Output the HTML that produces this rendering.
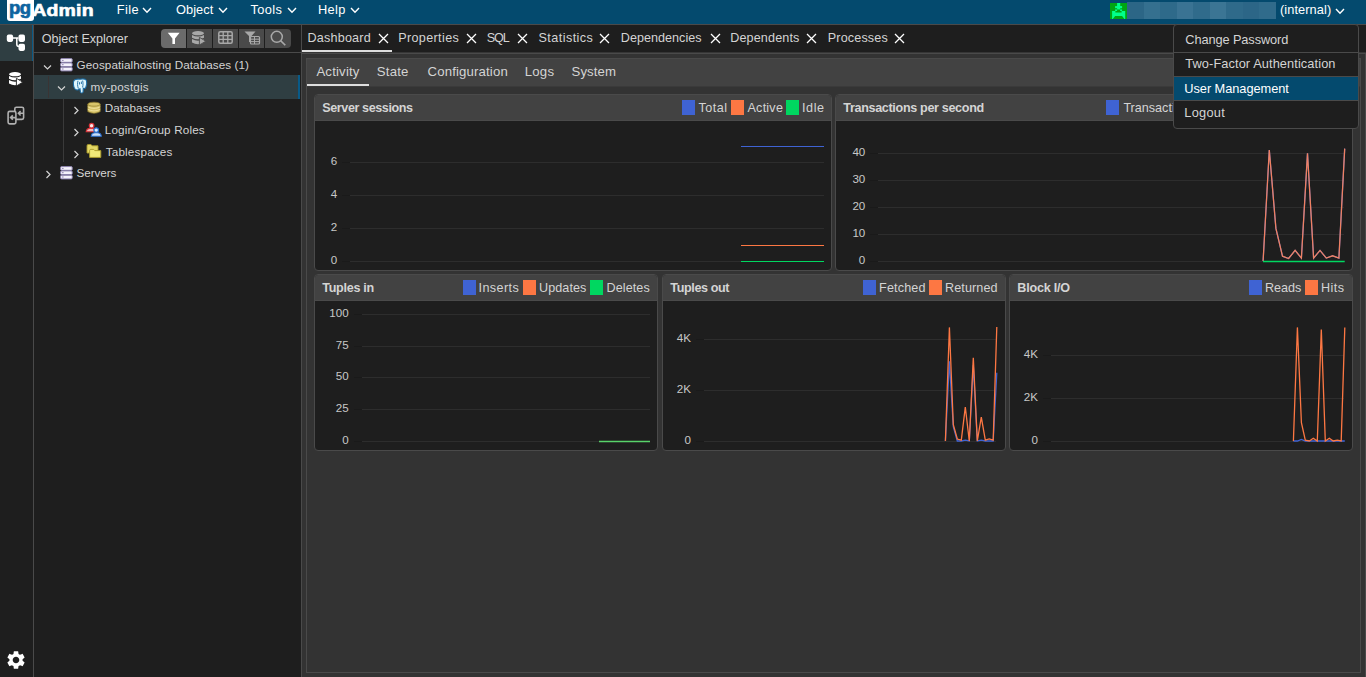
<!DOCTYPE html>
<html><head><meta charset="utf-8">
<style>
*{box-sizing:border-box;margin:0;padding:0}
html,body{width:1366px;height:677px;overflow:hidden;background:#1e1e1e;font-family:"Liberation Sans", sans-serif;position:relative}
.t{position:absolute;white-space:nowrap}
.r{position:absolute}
.s{position:absolute;overflow:visible}
</style></head><body>
<div class="r" style="left:0px;top:0px;width:1366px;height:24px;background:#044a6e;"></div>
<div class="r" style="left:0px;top:24px;width:1366px;height:1px;background:#4a4a4a;"></div>
<div class="r" style="left:7px;top:-3px;width:27px;height:24px;background:#ffffff;border-radius:3px"></div>
<div class="t" style="left:9.10px;top:-1px;font-size:18.5px;line-height:18.5px;color:#0d64a0;font-weight:bold;letter-spacing:-0.6px;-webkit-text-stroke:0.7px #0d64a0;">pg</div>
<div class="t" style="left:32.20px;top:0px;font-size:19.5px;line-height:19.5px;color:#ffffff;font-weight:bold;letter-spacing:0.2px;-webkit-text-stroke:0.7px #fff;transform:scaleY(0.88);transform-origin:0 16px;">Admin</div>
<div class="t" style="left:116.70px;top:4px;font-size:12.8px;line-height:12.8px;color:#ffffff;font-weight:normal;letter-spacing:0.433px;">File</div>
<svg class="s" style="left:142px;top:7.300000000000001px;" width="10" height="6.3" viewBox="0 0 10 6.3"><polyline points="1,1 5.0,5.3 9,1" fill="none" stroke="#fff" stroke-width="1.4"/></svg>
<div class="t" style="left:176.00px;top:4px;font-size:12.8px;line-height:12.8px;color:#ffffff;font-weight:normal;letter-spacing:0.06px;">Object</div>
<svg class="s" style="left:218px;top:7.300000000000001px;" width="10" height="6.3" viewBox="0 0 10 6.3"><polyline points="1,1 5.0,5.3 9,1" fill="none" stroke="#fff" stroke-width="1.4"/></svg>
<div class="t" style="left:250.50px;top:4px;font-size:12.8px;line-height:12.8px;color:#ffffff;font-weight:normal;letter-spacing:0.4px;">Tools</div>
<svg class="s" style="left:286.5px;top:7.300000000000001px;" width="10" height="6.3" viewBox="0 0 10 6.3"><polyline points="1,1 5.0,5.3 9,1" fill="none" stroke="#fff" stroke-width="1.4"/></svg>
<div class="t" style="left:318.00px;top:4px;font-size:12.8px;line-height:12.8px;color:#ffffff;font-weight:normal;letter-spacing:0.333px;">Help</div>
<svg class="s" style="left:350px;top:7.300000000000001px;" width="10" height="6.3" viewBox="0 0 10 6.3"><polyline points="1,1 5.0,5.3 9,1" fill="none" stroke="#fff" stroke-width="1.4"/></svg>
<div class="r" style="left:1110px;top:3px;width:17px;height:16px;background:#00a512;"></div>
<svg class="s" style="left:1110px;top:3px;" width="17" height="16" viewBox="0 0 17 16"><g fill="#00ff8a"><rect x="7.1" y="0" width="3.1" height="6.5"/><rect x="5.1" y="3.1" width="7" height="2.1"/><rect x="5.1" y="6.4" width="2" height="1.7"/><rect x="10.1" y="6.4" width="2" height="1.7"/><path d="M2.1 8.05 H15.2 V16 H14.4 L12.1 12.9 H5.1 L2.8 16 H2.1Z"/></g><rect x="5.4" y="8" width="6.2" height="1.5" fill="#00a512"/></svg>
<div class="r" style="left:1127px;top:2px;width:17px;height:17px;background:#2c6686;"></div>
<div class="r" style="left:1144px;top:2px;width:16px;height:17px;background:#35708f;"></div>
<div class="r" style="left:1160px;top:2px;width:17px;height:17px;background:#2e6a8a;"></div>
<div class="r" style="left:1177px;top:2px;width:16px;height:17px;background:#3a7393;"></div>
<div class="r" style="left:1193px;top:2px;width:17px;height:17px;background:#306b8b;"></div>
<div class="r" style="left:1210px;top:2px;width:16px;height:17px;background:#3b7594;"></div>
<div class="r" style="left:1226px;top:2px;width:17px;height:17px;background:#2f6a8a;"></div>
<div class="r" style="left:1243px;top:2px;width:16px;height:17px;background:#2c6687;"></div>
<div class="r" style="left:1259px;top:2px;width:17px;height:17px;background:#306b8b;"></div>
<div class="t" style="left:1280.00px;top:4px;font-size:12.8px;line-height:12.8px;color:#ffffff;font-weight:normal;letter-spacing:0.078px;">(internal)</div>
<svg class="s" style="left:1335px;top:7.6px;" width="10" height="6.3" viewBox="0 0 10 6.3"><polyline points="1,1 5.0,5.3 9,1" fill="none" stroke="#fff" stroke-width="1.4"/></svg>
<div class="r" style="left:0px;top:25px;width:33px;height:652px;background:#1e1e1e;"></div>
<div class="r" style="left:0px;top:25px;width:32px;height:36px;background:#2f3e42;"></div>
<div class="r" style="left:32px;top:25px;width:1px;height:36px;background:#0a5a86;"></div>
<div class="r" style="left:33px;top:25px;width:1px;height:652px;background:#4a4a4a;"></div>
<svg class="s" style="left:6px;top:33px;" width="20" height="19" viewBox="0 0 20 19"><g fill="#fff"><rect x="0.8" y="1.6" width="6.3" height="7.3" rx="1.8"/><rect x="12.5" y="1.6" width="6.5" height="7.3" rx="1.8"/><rect x="12.5" y="10.8" width="6.5" height="7.1" rx="1.8"/></g><path d="M7 5.1 H12.5 M10.8 5.1 V11.3 Q10.8 13.6 13 13.6" fill="none" stroke="#fff" stroke-width="1.5"/></svg>
<svg class="s" style="left:8px;top:71px;" width="16" height="16" viewBox="0 0 16 16"><g fill="#fff"><ellipse cx="7" cy="3.2" rx="6" ry="2.1"/><path d="M1 4.9 Q7 8.3 13 4.9 V7.7 Q7 11 1 7.7Z"/><path d="M1 9.1 Q7 12.4 13 9.1 V12.6 Q7 15.9 1 12.6Z"/></g><path d="M8.4 7.3 L14.8 11.2 L8.4 15Z" fill="#fff" stroke="#1e1e1e" stroke-width="0.9"/></svg>
<svg class="s" style="left:6px;top:105px;" width="20" height="22" viewBox="0 0 20 22"><g fill="none" stroke="#b0b0b0" stroke-width="1.6"><rect x="8.8" y="2.2" width="8.8" height="12.2" rx="1.6"/><path d="M17.6 8.3 H12.4 M14.6 6.1 L12.4 8.3 L14.6 10.5"/><rect x="2.1" y="6.4" width="7.8" height="12.5" rx="1.6" fill="#1e1e1e"/><path d="M9.9 12.6 H4.6 M6.8 10.4 L4.6 12.6 L6.8 14.8"/></g></svg>
<svg class="s" style="left:4.65px;top:648.75px;" width="22" height="22" viewBox="0 0 22 22"><g transform="scale(0.9167)"><path fill="#fff" fill-rule="evenodd" d="M19.14,12.94c0.04-0.3,0.06-0.61,0.06-0.94c0-0.32-0.02-0.64-0.07-0.94l2.03-1.58c0.18-0.14,0.23-0.41,0.12-0.61l-1.92-3.32c-0.12-0.22-0.37-0.29-0.59-0.22l-2.39,0.96c-0.5-0.38-1.03-0.7-1.62-0.94L14.4,2.81c-0.04-0.24-0.24-0.41-0.48-0.41h-3.84c-0.24,0-0.43,0.17-0.47,0.41L9.25,5.35C8.66,5.59,8.12,5.92,7.63,6.29L5.24,5.33c-0.22-0.08-0.47,0-0.59,0.22L2.74,8.87C2.62,9.08,2.66,9.34,2.86,9.48l2.03,1.58C4.84,11.36,4.8,11.69,4.8,12s0.02,0.64,0.07,0.94l-2.03,1.58c-0.18,0.14-0.23,0.41-0.12,0.61l1.92,3.32c0.12,0.22,0.37,0.29,0.59,0.22l2.39-0.96c0.5,0.38,1.03,0.7,1.62,0.94l0.36,2.54c0.05,0.24,0.24,0.41,0.48,0.41h3.84c0.24,0,0.44-0.17,0.47-0.41l0.36-2.54c0.59-0.24,1.13-0.56,1.62-0.94l2.39,0.96c0.22,0.08,0.47,0,0.59-0.22l1.92-3.32c0.12-0.22,0.07-0.47-0.12-0.61L19.14,12.94z M12,15.6c-1.98,0-3.6-1.62-3.6-3.6s1.62-3.6,3.6-3.6s3.6,1.62,3.6,3.6S13.98,15.6,12,15.6z"/></g></svg>
<div class="r" style="left:34px;top:25px;width:267px;height:652px;background:#1e1e1e;"></div>
<div class="r" style="left:34px;top:52px;width:267px;height:1px;background:#4a4a4a;"></div>
<div class="r" style="left:301px;top:25px;width:1px;height:652px;background:#4a4a4a;"></div>
<div class="t" style="left:41.80px;top:33px;font-size:12.6px;line-height:12.6px;color:#d4d4d4;font-weight:normal;letter-spacing:-0.043px;">Object Explorer</div>
<div class="r" style="left:161px;top:29px;width:25px;height:19px;background:#6b6b6b;border-radius:4px 0 0 4px"></div>
<div class="r" style="left:187px;top:29px;width:25px;height:19px;background:#4a4a4a;"></div>
<div class="r" style="left:213px;top:29px;width:25px;height:19px;background:#4a4a4a;"></div>
<div class="r" style="left:239px;top:29px;width:25px;height:19px;background:#4a4a4a;"></div>
<div class="r" style="left:265px;top:29px;width:26px;height:19px;background:#4a4a4a;border-radius:0 4px 4px 0"></div>
<svg class="s" style="left:167px;top:32px;" width="14" height="13" viewBox="0 0 14 13"><path d="M0.8 0.8 H12.6 L8 6.5 V12 H5.4 V6.5Z" fill="#fff"/></svg>
<svg class="s" style="left:191px;top:30px;" width="16" height="16" viewBox="0 0 16 16"><g fill="#a8a8a8"><ellipse cx="7" cy="3.2" rx="6" ry="2.1"/><path d="M1 4.9 Q7 8.3 13 4.9 V7.7 Q7 11 1 7.7Z"/><path d="M1 9.1 Q7 12.4 13 9.1 V12.6 Q7 15.9 1 12.6Z"/></g><path d="M8.4 7.3 L14.8 11.2 L8.4 15Z" fill="#a8a8a8" stroke="#4a4a4a" stroke-width="0.9"/></svg>
<svg class="s" style="left:218px;top:31px;" width="15" height="13" viewBox="0 0 15 13"><rect x="0.8" y="0.8" width="13.4" height="11.4" rx="1.5" fill="none" stroke="#a8a8a8" stroke-width="1.5"/><path d="M0.8 4.6 H14.2 M0.8 8.4 H14.2 M5.2 0.8 V12.2 M9.8 0.8 V12.2" stroke="#a8a8a8" stroke-width="1.3"/></svg>
<svg class="s" style="left:244px;top:31px;" width="16" height="14" viewBox="0 0 16 14"><path d="M0.5 0.5 H11.5 L7.5 5 V11 H5 V5Z" fill="#a8a8a8"/><rect x="6.5" y="5.5" width="9" height="7.5" rx="1" fill="#4a4a4a" stroke="#a8a8a8" stroke-width="1.2"/><path d="M6.5 8.2 H15.5 M6.5 10.6 H15.5 M10.5 5.5 V13" stroke="#a8a8a8" stroke-width="1"/></svg>
<svg class="s" style="left:270px;top:30px;" width="17" height="17" viewBox="0 0 17 17"><circle cx="6.8" cy="6.8" r="5.5" fill="none" stroke="#a8a8a8" stroke-width="1.5"/><path d="M10.6 10.6 L15.3 15.3" stroke="#a8a8a8" stroke-width="1.6"/></svg>
<div class="r" style="left:34px;top:75px;width:264px;height:24px;background:#2f3e42;"></div>
<div class="r" style="left:298px;top:75px;width:2px;height:24px;background:#085a88;"></div>
<div class="r" style="left:48px;top:76px;width:1px;height:22px;background:#3a3434;"></div>
<div class="r" style="left:63px;top:99px;width:1px;height:63px;background:#3a3a3a;"></div>
<svg class="s" style="left:42.5px;top:63.5px;" width="10" height="7" viewBox="0 0 10 7"><polyline points="1,1.5 4.5,5 8,1.5" fill="none" stroke="#d4d4d4" stroke-width="1.2"/></svg>
<svg class="s" style="left:59.5px;top:58px;" width="13" height="14" viewBox="0 0 13 14"><g fill="#f4f2fb" stroke="#8a80ad" stroke-width="1"><rect x="0.6" y="0.6" width="11.6" height="3.7" rx="1"/><rect x="0.6" y="4.9" width="11.6" height="3.7" rx="1"/><rect x="0.6" y="9.2" width="11.6" height="3.7" rx="1"/></g><g stroke="#8477a8" stroke-width="0.9"><path d="M2 2.4 H3.6 M2 6.7 H3.6 M2 11 H3.6"/></g></svg>
<div class="t" style="left:76.60px;top:59px;font-size:11.7px;line-height:11.7px;color:#d4d4d4;font-weight:normal;letter-spacing:0.073px;">Geospatialhosting Databases (1)</div>
<svg class="s" style="left:57px;top:85px;" width="10" height="7" viewBox="0 0 10 7"><polyline points="1,1.5 4.5,5 8,1.5" fill="none" stroke="#d4d4d4" stroke-width="1.2"/></svg>
<svg class="s" style="left:72px;top:78px;" width="16" height="16" viewBox="0 0 16 16"><path d="M2 2.5 C3 1 6 1 8 1.2 C10 0.8 13.5 0.8 14.5 2.5 C15 4.5 14.6 8 13.6 10 L12.2 10.5 L11.3 10.2 L11.1 14 C10.9 15.3 8.6 15.3 8.4 14 L8 10.8 C7.2 11.2 6.6 11.6 5.6 12 C3 12 1.8 10 1.5 7 C1.2 5 1.3 3.5 2 2.5Z" fill="#def6fd" stroke="#1a6aa3" stroke-width="1.1"/><path d="M6 2.8 C5.3 5 5.4 8 6.4 10.6 M10.6 2.6 C11.2 4.6 11.1 7 10.6 9.4 M7.5 4.2 V6.5 M9.4 3.6 V6" fill="none" stroke="#1a6aa3" stroke-width="0.9"/></svg>
<div class="t" style="left:90.50px;top:81px;font-size:11.7px;line-height:11.7px;color:#d4d4d4;font-weight:normal;letter-spacing:0.178px;">my-postgis</div>
<svg class="s" style="left:73px;top:105.5px;" width="7" height="9" viewBox="0 0 7 9"><polyline points="1.5,1 5,4.5 1.5,8" fill="none" stroke="#d4d4d4" stroke-width="1.2"/></svg>
<svg class="s" style="left:87px;top:101px;" width="14" height="14" viewBox="0 0 14 14"><g fill="#d9c56a" stroke="#8f7d2c" stroke-width="0.7"><path d="M0.8 3.2 V10.6 Q7 14 13.2 10.6 V3.2Z"/><ellipse cx="7" cy="3.2" rx="6.2" ry="2"/></g><path d="M0.8 5.8 Q7 9 13.2 5.8 M0.8 8.3 Q7 11.5 13.2 8.3" fill="none" stroke="#f3e6a8" stroke-width="0.8"/></svg>
<div class="t" style="left:104.80px;top:102px;font-size:11.7px;line-height:11.7px;color:#d4d4d4;font-weight:normal;letter-spacing:0.025px;">Databases</div>
<svg class="s" style="left:73px;top:127.5px;" width="7" height="9" viewBox="0 0 7 9"><polyline points="1.5,1 5,4.5 1.5,8" fill="none" stroke="#d4d4d4" stroke-width="1.2"/></svg>
<svg class="s" style="left:85px;top:122px;" width="17" height="15" viewBox="0 0 17 15"><circle cx="6.6" cy="3.7" r="2.3" fill="#fbe9e9" stroke="#d9343a" stroke-width="1.2"/><path d="M1.2 9.8 Q1.5 6.6 5 6.4 H8.2 Q9.6 6.8 9.8 9.8Z" fill="#f1b9b9" stroke="#d9343a" stroke-width="1.1"/><circle cx="11.2" cy="8.1" r="2.3" fill="#dcecfb" stroke="#2a6fd0" stroke-width="1.2"/><path d="M6.2 14.2 Q6.5 10.9 10 10.7 H12.5 Q16 10.9 16.3 14.2Z" fill="#c9def7" stroke="#2a6fd0" stroke-width="1.1"/></svg>
<div class="t" style="left:104.80px;top:124px;font-size:11.7px;line-height:11.7px;color:#d4d4d4;font-weight:normal;letter-spacing:0.15px;">Login/Group Roles</div>
<svg class="s" style="left:73px;top:149.5px;" width="7" height="9" viewBox="0 0 7 9"><polyline points="1.5,1 5,4.5 1.5,8" fill="none" stroke="#d4d4d4" stroke-width="1.2"/></svg>
<svg class="s" style="left:86px;top:143px;" width="16" height="16" viewBox="0 0 16 16"><path d="M1 2.8 Q1 1.5 2.2 1.5 H5 L6.2 2.8 H12 V10 H1Z" fill="#e3d866" stroke="#a89828" stroke-width="0.9"/><path d="M3.6 7.6 Q3.6 6.4 4.8 6.4 H7.6 L8.8 7.6 H14.8 V14.4 H3.6Z" fill="#f0e878" stroke="#a89828" stroke-width="0.9"/></svg>
<div class="t" style="left:105.80px;top:146px;font-size:11.7px;line-height:11.7px;color:#d4d4d4;font-weight:normal;letter-spacing:0.15px;">Tablespaces</div>
<svg class="s" style="left:44.5px;top:170px;" width="7" height="9" viewBox="0 0 7 9"><polyline points="1.5,1 5,4.5 1.5,8" fill="none" stroke="#d4d4d4" stroke-width="1.2"/></svg>
<svg class="s" style="left:59.5px;top:166px;" width="13" height="14" viewBox="0 0 13 14"><g fill="#f4f2fb" stroke="#8a80ad" stroke-width="1"><rect x="0.6" y="0.6" width="11.6" height="3.7" rx="1"/><rect x="0.6" y="4.9" width="11.6" height="3.7" rx="1"/><rect x="0.6" y="9.2" width="11.6" height="3.7" rx="1"/></g><g stroke="#8477a8" stroke-width="0.9"><path d="M2 2.4 H3.6 M2 6.7 H3.6 M2 11 H3.6"/></g></svg>
<div class="t" style="left:76.60px;top:167px;font-size:11.7px;line-height:11.7px;color:#d4d4d4;font-weight:normal;letter-spacing:-0.067px;">Servers</div>
<div class="r" style="left:302px;top:25px;width:1064px;height:652px;background:#333333;"></div>
<div class="r" style="left:302px;top:25px;width:1064px;height:27px;background:#1e1e1e;"></div>
<div class="r" style="left:302px;top:52px;width:1064px;height:1px;background:#363636;"></div>
<div class="r" style="left:302px;top:53px;width:1064px;height:1px;background:#4a4a4a;"></div>
<div class="r" style="left:1365px;top:53px;width:1px;height:624px;background:#4a4a4a;"></div>
<div class="r" style="left:302px;top:50px;width:90px;height:2px;background:#dedede;"></div>
<div class="t" style="left:307.50px;top:32px;font-size:12.6px;line-height:12.6px;color:#d4d4d4;font-weight:normal;letter-spacing:0.2px;">Dashboard</div>
<svg class="s" style="left:377.5px;top:33.3px;" width="11" height="11" viewBox="0 0 11 11"><path d="M1 1 L10 10 M10 1 L1 10" stroke="#fff" stroke-width="1.3"/></svg>
<div class="t" style="left:398.20px;top:32px;font-size:12.6px;line-height:12.6px;color:#d4d4d4;font-weight:normal;letter-spacing:0.356px;">Properties</div>
<svg class="s" style="left:465.6px;top:33.3px;" width="11" height="11" viewBox="0 0 11 11"><path d="M1 1 L10 10 M10 1 L1 10" stroke="#fff" stroke-width="1.3"/></svg>
<div class="t" style="left:486.70px;top:32px;font-size:12.6px;line-height:12.6px;color:#d4d4d4;font-weight:normal;letter-spacing:-1.05px;">SQL</div>
<svg class="s" style="left:517.4px;top:33.3px;" width="11" height="11" viewBox="0 0 11 11"><path d="M1 1 L10 10 M10 1 L1 10" stroke="#fff" stroke-width="1.3"/></svg>
<div class="t" style="left:538.50px;top:32px;font-size:12.6px;line-height:12.6px;color:#d4d4d4;font-weight:normal;letter-spacing:0.444px;">Statistics</div>
<svg class="s" style="left:599.4px;top:33.3px;" width="11" height="11" viewBox="0 0 11 11"><path d="M1 1 L10 10 M10 1 L1 10" stroke="#fff" stroke-width="1.3"/></svg>
<div class="t" style="left:620.80px;top:32px;font-size:12.6px;line-height:12.6px;color:#d4d4d4;font-weight:normal;letter-spacing:0.018px;">Dependencies</div>
<svg class="s" style="left:709.7px;top:33.3px;" width="11" height="11" viewBox="0 0 11 11"><path d="M1 1 L10 10 M10 1 L1 10" stroke="#fff" stroke-width="1.3"/></svg>
<div class="t" style="left:730.20px;top:32px;font-size:12.6px;line-height:12.6px;color:#d4d4d4;font-weight:normal;letter-spacing:0.144px;">Dependents</div>
<svg class="s" style="left:806.4px;top:33.3px;" width="11" height="11" viewBox="0 0 11 11"><path d="M1 1 L10 10 M10 1 L1 10" stroke="#fff" stroke-width="1.3"/></svg>
<div class="t" style="left:827.80px;top:32px;font-size:12.6px;line-height:12.6px;color:#d4d4d4;font-weight:normal;letter-spacing:0.138px;">Processes</div>
<svg class="s" style="left:894.2px;top:33.3px;" width="11" height="11" viewBox="0 0 11 11"><path d="M1 1 L10 10 M10 1 L1 10" stroke="#fff" stroke-width="1.3"/></svg>
<div class="r" style="left:306px;top:58px;width:1055px;height:615px;background:#333333;border:1px solid #4a4a4a;"></div>
<div class="r" style="left:307px;top:59px;width:1053px;height:27px;background:#424242;"></div>
<div class="r" style="left:307px;top:86px;width:1053px;height:1px;background:#3a3a3a;"></div>
<div class="r" style="left:307px;top:84px;width:62px;height:2px;background:#dedede;"></div>
<div class="t" style="left:316.40px;top:65px;font-size:13.2px;line-height:13.2px;color:#d4d4d4;font-weight:normal;letter-spacing:0.186px;">Activity</div>
<div class="t" style="left:376.80px;top:65px;font-size:13.2px;line-height:13.2px;color:#d4d4d4;font-weight:normal;letter-spacing:0.2px;">State</div>
<div class="t" style="left:427.60px;top:65px;font-size:13.2px;line-height:13.2px;color:#d4d4d4;font-weight:normal;letter-spacing:0.142px;">Configuration</div>
<div class="t" style="left:524.70px;top:65px;font-size:13.2px;line-height:13.2px;color:#d4d4d4;font-weight:normal;letter-spacing:0.233px;">Logs</div>
<div class="t" style="left:571.60px;top:65px;font-size:13.2px;line-height:13.2px;color:#d4d4d4;font-weight:normal;letter-spacing:0.06px;">System</div>
<div class="r" style="left:314px;top:94px;width:518px;height:177px;background:#1e1e1e;border:1px solid #4a4a4a;border-radius:4px;box-sizing:border-box"></div>
<div class="r" style="left:315px;top:95px;width:516px;height:25px;background:#424242;border-radius:3px 3px 0 0"></div>
<div class="r" style="left:315px;top:120px;width:516px;height:1px;background:#4a4a4a;"></div>
<div class="t" style="left:322.30px;top:102px;font-size:12.6px;line-height:12.6px;color:#d4d4d4;font-weight:bold;letter-spacing:-0.421px;">Server sessions</div>
<div class="r" style="left:682px;top:100px;width:13px;height:15px;background:#3f63d3;"></div>
<div class="t" style="left:698.40px;top:102px;font-size:12.6px;line-height:12.6px;color:#d4d4d4;font-weight:normal;letter-spacing:0.5px;">Total</div>
<div class="r" style="left:731px;top:100px;width:13px;height:15px;background:#fd7743;"></div>
<div class="t" style="left:747.50px;top:102px;font-size:12.6px;line-height:12.6px;color:#d4d4d4;font-weight:normal;letter-spacing:0.22px;">Active</div>
<div class="r" style="left:786px;top:100px;width:13px;height:15px;background:#00d760;"></div>
<div class="t" style="left:802.00px;top:102px;font-size:12.6px;line-height:12.6px;color:#d4d4d4;font-weight:normal;letter-spacing:0.567px;">Idle</div>
<div class="r" style="left:835px;top:94px;width:518px;height:177px;background:#1e1e1e;border:1px solid #4a4a4a;border-radius:4px;box-sizing:border-box"></div>
<div class="r" style="left:836px;top:95px;width:516px;height:25px;background:#424242;border-radius:3px 3px 0 0"></div>
<div class="r" style="left:836px;top:120px;width:516px;height:1px;background:#4a4a4a;"></div>
<div class="t" style="left:843.30px;top:102px;font-size:12.6px;line-height:12.6px;color:#d4d4d4;font-weight:bold;letter-spacing:-0.341px;">Transactions per second</div>
<div class="r" style="left:1106px;top:100px;width:13px;height:15px;background:#3f63d3;"></div>
<div class="t" style="left:1123.40px;top:102px;font-size:12.6px;line-height:12.6px;color:#d4d4d4;font-weight:normal;letter-spacing:0px;">Transactions</div>
<div class="r" style="left:314px;top:274px;width:344px;height:177px;background:#1e1e1e;border:1px solid #4a4a4a;border-radius:4px;box-sizing:border-box"></div>
<div class="r" style="left:315px;top:275px;width:342px;height:25px;background:#424242;border-radius:3px 3px 0 0"></div>
<div class="r" style="left:315px;top:300px;width:342px;height:1px;background:#4a4a4a;"></div>
<div class="t" style="left:322.30px;top:282px;font-size:12.6px;line-height:12.6px;color:#d4d4d4;font-weight:bold;letter-spacing:-0.312px;">Tuples in</div>
<div class="r" style="left:463px;top:280px;width:13px;height:15px;background:#3f63d3;"></div>
<div class="t" style="left:478.60px;top:282px;font-size:12.6px;line-height:12.6px;color:#d4d4d4;font-weight:normal;letter-spacing:0.383px;">Inserts</div>
<div class="r" style="left:523px;top:280px;width:13px;height:15px;background:#fd7743;"></div>
<div class="t" style="left:539.00px;top:282px;font-size:12.6px;line-height:12.6px;color:#d4d4d4;font-weight:normal;letter-spacing:0.083px;">Updates</div>
<div class="r" style="left:590px;top:280px;width:13px;height:15px;background:#00d760;"></div>
<div class="t" style="left:606.50px;top:282px;font-size:12.6px;line-height:12.6px;color:#d4d4d4;font-weight:normal;letter-spacing:0.083px;">Deletes</div>
<div class="r" style="left:662px;top:274px;width:344px;height:177px;background:#1e1e1e;border:1px solid #4a4a4a;border-radius:4px;box-sizing:border-box"></div>
<div class="r" style="left:663px;top:275px;width:342px;height:25px;background:#424242;border-radius:3px 3px 0 0"></div>
<div class="r" style="left:663px;top:300px;width:342px;height:1px;background:#4a4a4a;"></div>
<div class="t" style="left:670.30px;top:282px;font-size:12.6px;line-height:12.6px;color:#d4d4d4;font-weight:bold;letter-spacing:-0.389px;">Tuples out</div>
<div class="r" style="left:863px;top:280px;width:13px;height:15px;background:#3f63d3;"></div>
<div class="t" style="left:879.10px;top:282px;font-size:12.6px;line-height:12.6px;color:#d4d4d4;font-weight:normal;letter-spacing:0.15px;">Fetched</div>
<div class="r" style="left:929px;top:280px;width:13px;height:15px;background:#fd7743;"></div>
<div class="t" style="left:945.00px;top:282px;font-size:12.6px;line-height:12.6px;color:#d4d4d4;font-weight:normal;letter-spacing:0.114px;">Returned</div>
<div class="r" style="left:1009px;top:274px;width:344px;height:177px;background:#1e1e1e;border:1px solid #4a4a4a;border-radius:4px;box-sizing:border-box"></div>
<div class="r" style="left:1010px;top:275px;width:342px;height:25px;background:#424242;border-radius:3px 3px 0 0"></div>
<div class="r" style="left:1010px;top:300px;width:342px;height:1px;background:#4a4a4a;"></div>
<div class="t" style="left:1017.30px;top:282px;font-size:12.6px;line-height:12.6px;color:#d4d4d4;font-weight:bold;letter-spacing:-0.225px;">Block I/O</div>
<div class="r" style="left:1249px;top:280px;width:13px;height:15px;background:#3f63d3;"></div>
<div class="t" style="left:1265.00px;top:282px;font-size:12.6px;line-height:12.6px;color:#d4d4d4;font-weight:normal;letter-spacing:-0.025px;">Reads</div>
<div class="r" style="left:1305px;top:280px;width:13px;height:15px;background:#fd7743;"></div>
<div class="t" style="left:1320.90px;top:282px;font-size:12.6px;line-height:12.6px;color:#d4d4d4;font-weight:normal;letter-spacing:0.5px;">Hits</div>
<div class="r" style="left:342px;top:162px;width:8px;height:1px;background:#1a1a1a;"></div>
<div class="r" style="left:350px;top:162px;width:474px;height:1px;background:#2d2d2d;"></div>
<div class="t" style="left:277.2px;width:60px;text-align:right;top:155px;font-size:11.6px;line-height:11.6px;color:#c8c8c8">6</div>
<div class="r" style="left:342px;top:195px;width:8px;height:1px;background:#1a1a1a;"></div>
<div class="r" style="left:350px;top:195px;width:474px;height:1px;background:#2d2d2d;"></div>
<div class="t" style="left:277.2px;width:60px;text-align:right;top:188px;font-size:11.6px;line-height:11.6px;color:#c8c8c8">4</div>
<div class="r" style="left:342px;top:228px;width:8px;height:1px;background:#1a1a1a;"></div>
<div class="r" style="left:350px;top:228px;width:474px;height:1px;background:#2d2d2d;"></div>
<div class="t" style="left:277.2px;width:60px;text-align:right;top:221px;font-size:11.6px;line-height:11.6px;color:#c8c8c8">2</div>
<div class="r" style="left:342px;top:261px;width:8px;height:1px;background:#1a1a1a;"></div>
<div class="r" style="left:350px;top:261px;width:474px;height:1px;background:#2d2d2d;"></div>
<div class="t" style="left:277.2px;width:60px;text-align:right;top:254px;font-size:11.6px;line-height:11.6px;color:#c8c8c8">0</div>
<div class="r" style="left:870px;top:153px;width:8px;height:1px;background:#1a1a1a;"></div>
<div class="r" style="left:878px;top:153px;width:466px;height:1px;background:#2d2d2d;"></div>
<div class="t" style="left:805.3px;width:60px;text-align:right;top:146px;font-size:11.6px;line-height:11.6px;color:#c8c8c8">40</div>
<div class="r" style="left:870px;top:180px;width:8px;height:1px;background:#1a1a1a;"></div>
<div class="r" style="left:878px;top:180px;width:466px;height:1px;background:#2d2d2d;"></div>
<div class="t" style="left:805.3px;width:60px;text-align:right;top:173px;font-size:11.6px;line-height:11.6px;color:#c8c8c8">30</div>
<div class="r" style="left:870px;top:207px;width:8px;height:1px;background:#1a1a1a;"></div>
<div class="r" style="left:878px;top:207px;width:466px;height:1px;background:#2d2d2d;"></div>
<div class="t" style="left:805.3px;width:60px;text-align:right;top:200px;font-size:11.6px;line-height:11.6px;color:#c8c8c8">20</div>
<div class="r" style="left:870px;top:234px;width:8px;height:1px;background:#1a1a1a;"></div>
<div class="r" style="left:878px;top:234px;width:466px;height:1px;background:#2d2d2d;"></div>
<div class="t" style="left:805.3px;width:60px;text-align:right;top:227px;font-size:11.6px;line-height:11.6px;color:#c8c8c8">10</div>
<div class="r" style="left:870px;top:261px;width:8px;height:1px;background:#1a1a1a;"></div>
<div class="r" style="left:878px;top:261px;width:466px;height:1px;background:#2d2d2d;"></div>
<div class="t" style="left:805.3px;width:60px;text-align:right;top:254px;font-size:11.6px;line-height:11.6px;color:#c8c8c8">0</div>
<div class="r" style="left:354px;top:314px;width:8px;height:1px;background:#1a1a1a;"></div>
<div class="r" style="left:362px;top:314px;width:288px;height:1px;background:#2d2d2d;"></div>
<div class="t" style="left:288.6px;width:60px;text-align:right;top:307px;font-size:11.6px;line-height:11.6px;color:#c8c8c8">100</div>
<div class="r" style="left:354px;top:346px;width:8px;height:1px;background:#1a1a1a;"></div>
<div class="r" style="left:362px;top:346px;width:288px;height:1px;background:#2d2d2d;"></div>
<div class="t" style="left:288.6px;width:60px;text-align:right;top:339px;font-size:11.6px;line-height:11.6px;color:#c8c8c8">75</div>
<div class="r" style="left:354px;top:377px;width:8px;height:1px;background:#1a1a1a;"></div>
<div class="r" style="left:362px;top:377px;width:288px;height:1px;background:#2d2d2d;"></div>
<div class="t" style="left:288.6px;width:60px;text-align:right;top:370px;font-size:11.6px;line-height:11.6px;color:#c8c8c8">50</div>
<div class="r" style="left:354px;top:409px;width:8px;height:1px;background:#1a1a1a;"></div>
<div class="r" style="left:362px;top:409px;width:288px;height:1px;background:#2d2d2d;"></div>
<div class="t" style="left:288.6px;width:60px;text-align:right;top:402px;font-size:11.6px;line-height:11.6px;color:#c8c8c8">25</div>
<div class="r" style="left:354px;top:441px;width:8px;height:1px;background:#1a1a1a;"></div>
<div class="r" style="left:362px;top:441px;width:288px;height:1px;background:#2d2d2d;"></div>
<div class="t" style="left:288.6px;width:60px;text-align:right;top:434px;font-size:11.6px;line-height:11.6px;color:#c8c8c8">0</div>
<div class="r" style="left:696px;top:339px;width:8px;height:1px;background:#1a1a1a;"></div>
<div class="r" style="left:704px;top:339px;width:292px;height:1px;background:#2d2d2d;"></div>
<div class="t" style="left:631px;width:60px;text-align:right;top:332px;font-size:11.6px;line-height:11.6px;color:#c8c8c8">4K</div>
<div class="r" style="left:696px;top:390px;width:8px;height:1px;background:#1a1a1a;"></div>
<div class="r" style="left:704px;top:390px;width:292px;height:1px;background:#2d2d2d;"></div>
<div class="t" style="left:631px;width:60px;text-align:right;top:383px;font-size:11.6px;line-height:11.6px;color:#c8c8c8">2K</div>
<div class="r" style="left:696px;top:441px;width:8px;height:1px;background:#1a1a1a;"></div>
<div class="r" style="left:704px;top:441px;width:292px;height:1px;background:#2d2d2d;"></div>
<div class="t" style="left:631px;width:60px;text-align:right;top:434px;font-size:11.6px;line-height:11.6px;color:#c8c8c8">0</div>
<div class="r" style="left:1043px;top:355px;width:8px;height:1px;background:#1a1a1a;"></div>
<div class="r" style="left:1051px;top:355px;width:293px;height:1px;background:#2d2d2d;"></div>
<div class="t" style="left:978px;width:60px;text-align:right;top:348px;font-size:11.6px;line-height:11.6px;color:#c8c8c8">4K</div>
<div class="r" style="left:1043px;top:398px;width:8px;height:1px;background:#1a1a1a;"></div>
<div class="r" style="left:1051px;top:398px;width:293px;height:1px;background:#2d2d2d;"></div>
<div class="t" style="left:978px;width:60px;text-align:right;top:391px;font-size:11.6px;line-height:11.6px;color:#c8c8c8">2K</div>
<div class="r" style="left:1043px;top:441px;width:8px;height:1px;background:#1a1a1a;"></div>
<div class="r" style="left:1051px;top:441px;width:293px;height:1px;background:#2d2d2d;"></div>
<div class="t" style="left:978px;width:60px;text-align:right;top:434px;font-size:11.6px;line-height:11.6px;color:#c8c8c8">0</div>
<svg class="s" style="left:738px;top:143px;" width="89" height="7" viewBox="0 0 89 7"><polyline points="3.00,3.50 86.00,3.50" fill="none" stroke="#3f63d3" stroke-width="1.2" stroke-linejoin="miter"/></svg>
<svg class="s" style="left:738px;top:242px;" width="89" height="7" viewBox="0 0 89 7"><polyline points="3.00,3.50 86.00,3.50" fill="none" stroke="#fd7743" stroke-width="1.2" stroke-linejoin="miter"/></svg>
<svg class="s" style="left:738px;top:258px;" width="89" height="7" viewBox="0 0 89 7"><polyline points="3.00,3.50 86.00,3.50" fill="none" stroke="#00d760" stroke-width="1.2" stroke-linejoin="miter"/></svg>
<svg class="s" style="left:1260px;top:145px;" width="88" height="119" viewBox="0 0 88 119"><polyline points="3.10,116.00 9.30,5.00 15.90,83.40 22.50,111.20 28.60,113.50 35.10,105.40 41.40,113.10 47.50,8.40 53.60,113.10 60.00,105.40 66.30,113.10 72.60,110.80 78.90,113.10 84.70,3.60" fill="none" stroke="#3f63d3" stroke-width="1.2" stroke-linejoin="miter"/></svg>
<svg class="s" style="left:1260px;top:145px;" width="88" height="119" viewBox="0 0 88 119"><polyline points="3.10,116.00 9.30,5.00 15.90,83.40 22.50,111.20 28.60,113.50 35.10,105.40 41.40,113.10 47.50,8.40 53.60,113.10 60.00,105.40 66.30,113.10 72.60,110.80 78.90,113.10 84.70,3.60" fill="none" stroke="#f08060" stroke-width="1.3" stroke-linejoin="miter"/></svg>
<svg class="s" style="left:1260px;top:258px;" width="88" height="7" viewBox="0 0 88 7"><polyline points="3.00,3.50 84.70,3.50" fill="none" stroke="#00d760" stroke-width="1.3" stroke-linejoin="miter"/></svg>
<svg class="s" style="left:596px;top:438px;" width="57" height="7" viewBox="0 0 57 7"><polyline points="3.00,3.50 54.00,3.50" fill="none" stroke="#58d26a" stroke-width="1.3" stroke-linejoin="miter"/></svg>
<svg class="s" style="left:942px;top:358px;" width="58" height="86" viewBox="0 0 58 86"><polyline points="3.40,83.00 7.40,3.30 11.30,68.70 15.30,83.00 19.30,83.00 23.30,82.20 27.30,83.00 31.30,7.00 35.30,83.00 39.30,82.20 43.30,83.00 47.20,83.00 51.20,83.00 54.80,14.80" fill="none" stroke="#3f63d3" stroke-width="1.3" stroke-linejoin="miter"/></svg>
<svg class="s" style="left:942px;top:324px;" width="58" height="120" viewBox="0 0 58 120"><polyline points="3.40,117.00 7.40,3.40 11.30,100.70 15.30,115.00 19.30,116.20 23.30,83.10 27.30,117.00 31.30,33.90 35.30,117.00 39.30,93.10 43.30,116.20 47.20,115.00 51.20,116.20 54.80,3.00" fill="none" stroke="#fd7743" stroke-width="1.3" stroke-linejoin="miter"/></svg>
<svg class="s" style="left:1290px;top:436px;" width="58" height="8" viewBox="0 0 58 8"><polyline points="3.40,5.00 7.40,5.00 11.40,3.50 15.30,5.00 19.30,5.00 23.30,5.00 27.30,5.00 31.30,5.00 35.30,5.00 39.30,5.00 43.30,5.00 47.30,5.00 51.20,5.00 54.80,5.00" fill="none" stroke="#3f63d3" stroke-width="1.3" stroke-linejoin="miter"/></svg>
<svg class="s" style="left:1290px;top:324px;" width="58" height="120" viewBox="0 0 58 120"><polyline points="3.40,117.00 7.40,3.40 11.40,98.70 15.30,116.20 19.30,117.00 23.30,114.30 27.30,117.00 31.30,5.40 35.30,117.00 39.30,114.30 43.30,117.00 47.30,116.20 51.20,117.00 54.80,3.40" fill="none" stroke="#fd7743" stroke-width="1.3" stroke-linejoin="miter"/></svg>
<div class="r" style="left:1173px;top:24px;width:186px;height:105px;background:#1e1e1e;border:1px solid #4a4a4a;border-radius:4px;box-sizing:border-box"></div>
<div class="r" style="left:1174px;top:52px;width:184px;height:1px;background:#4a4a4a;"></div>
<div class="r" style="left:1174px;top:76px;width:184px;height:1px;background:#4a4a4a;"></div>
<div class="r" style="left:1174px;top:77px;width:184px;height:23px;background:#044a6e;"></div>
<div class="r" style="left:1174px;top:100px;width:184px;height:1px;background:#4a4a4a;"></div>
<div class="t" style="left:1185.30px;top:34px;font-size:12.8px;line-height:12.8px;color:#d4d4d4;font-weight:normal;letter-spacing:-0.107px;">Change Password</div>
<div class="t" style="left:1185.30px;top:58px;font-size:12.8px;line-height:12.8px;color:#d4d4d4;font-weight:normal;letter-spacing:0.092px;">Two-Factor Authentication</div>
<div class="t" style="left:1184.30px;top:83px;font-size:12.8px;line-height:12.8px;color:#ffffff;font-weight:normal;letter-spacing:-0.05px;">User Management</div>
<div class="t" style="left:1184.30px;top:107px;font-size:12.8px;line-height:12.8px;color:#d4d4d4;font-weight:normal;letter-spacing:0.26px;">Logout</div>
</body></html>
